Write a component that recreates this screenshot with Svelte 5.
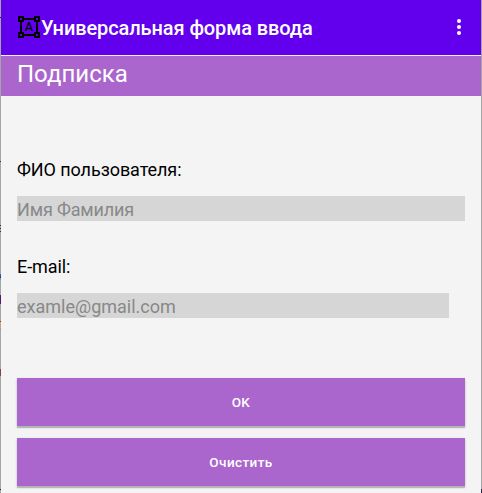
<script>
  const fields = [
    { id: 'name', label: 'ФИО пользователя:', hint: 'Имя Фамилия', short: false },
    { id: 'email', label: 'E-mail:', hint: 'examle@gmail.com', short: true }
  ];
  const buttons = ['OK', 'Очистить'];
</script>

<div class="window">
  <div class="edge left"></div>
  <main>
    <header>
      <svg class="shapes" viewBox="1 1 22 22" aria-hidden="true">
        <path d="M23 7V1h-6v2H7V1H1v6h2v10H1v6h6v-2h10v2h6v-6h-2V7h2zM3 3h2v2H3V3zm2 18H3v-2h2v2zm12-2H7v-2H5V7h2V5h10v2h2v10h-2v2zm4 2h-2v-2h2v2zM19 5V3h2v2h-2z" />
        <text x="12" y="16.1" text-anchor="middle">A</text>
      </svg>
      <h1>Универсальная форма ввода</h1>
      <svg class="more" viewBox="0 0 4 16" aria-hidden="true">
        <circle cx="2" cy="2" r="2" /><circle cx="2" cy="8" r="2" /><circle cx="2" cy="14" r="2" />
      </svg>
    </header>
    <h2>Подписка</h2>
    <form>
      {#each fields as field}
        <div class="field">
          <label for={field.id}>{field.label}</label>
          <input id={field.id} class:short={field.short} placeholder={field.hint} />
        </div>
      {/each}
      <div class="actions">
        {#each buttons as button}
          <button type="button">{button}</button>
        {/each}
      </div>
    </form>
  </main>
  <div class="edge right"></div>
</div>

<style>
  .window {
    display: flex;
    width: 482px;
    height: 493px;
    overflow: hidden;
    font-family: Roboto, sans-serif;
    background: #f4f4f4;
  }
  .edge { flex: none; width: 1px; background: #a5a5a5; }
  .left {
    background: linear-gradient(#a5a5a5 17px, #222 17px 18px, #a5a5a5 18px 161px, #333 161px 162px, #a5a5a5 162px 225px, #333 225px 226px, #a5a5a5 226px 228px, #333 228px 229px, #a5a5a5 229px 231px, #333 231px 232px, #a5a5a5 232px 274px, #286a9c 274px 276px, #5b2370 276px 278px, #48aebc 278px 280px, #a5a5a5 280px 295px, #4b1c70 295px 304px, #a5a5a5 304px 321px, #7b4031 321px 322px, #d2a566 322px 328px, #78aabd 328px 330px, #a5a5a5 330px 369px, #85443e 369px 376px, #a5a5a5 376px 489px, #222 489px 490px, #a5a5a5 490px);
  }
  .right {
    background: linear-gradient(#a5a5a5 489px, #2d1745 489px);
  }
  main { flex: 1; min-width: 0; }
  header {
    display: flex;
    align-items: center;
    box-sizing: border-box;
    height: 55px;
    padding: 0 20px 0 17px;
    background: #6200ee;
    color: #fff;
  }
  .shapes { width: 22px; height: 22px; margin-top: -1px; }
  .shapes text { font: 500 12.5px Roboto, sans-serif; }
  h1 {
    flex: 1;
    margin: 1px 0 0 1px;
    font-size: 20px;
    line-height: 24px;
    font-weight: 500;
    letter-spacing: -0.1px;
    white-space: nowrap;
  }
  .more { width: 4px; height: 16px; margin-top: -1px; fill: #fff; }
  h2 {
    box-sizing: border-box;
    height: 40px;
    margin: 1px 0 0;
    padding: 2px 16px;
    background: #aa66cc;
    color: #fff;
    font-size: 24px;
    line-height: 32px;
    font-weight: 400;
  }
  form { padding: 62px 16px 0; }
  .field { height: 97px; }
  label {
    display: block;
    height: 38px;
    color: #000;
    font-size: 18px;
    line-height: 24px;
    letter-spacing: -0.08px;
  }
  input {
    display: block;
    box-sizing: border-box;
    width: 448px;
    height: 25px;
    padding: 2px 0 0;
    border: 0;
    outline: 0;
    border-radius: 0;
    background: #d6d6d6;
    color: #000;
    font: 18px Roboto, sans-serif;
    letter-spacing: -0.15px;
  }
  input.short { width: 432px; letter-spacing: 0; }
  input::placeholder { color: #888; opacity: 1; }
  .actions {
    display: flex;
    flex-direction: column;
    gap: 12px;
    padding-top: 26px;
  }
  button {
    height: 48px;
    padding: 0;
    border: 0;
    background: #aa66cc;
    box-shadow: 0 2px 1px rgba(0, 0, 0, .2), 0 1px 3px rgba(0, 0, 0, .14);
    color: #fff;
    font: 500 13.5px Roboto, sans-serif;
    letter-spacing: 0.4px;
  }
</style>
